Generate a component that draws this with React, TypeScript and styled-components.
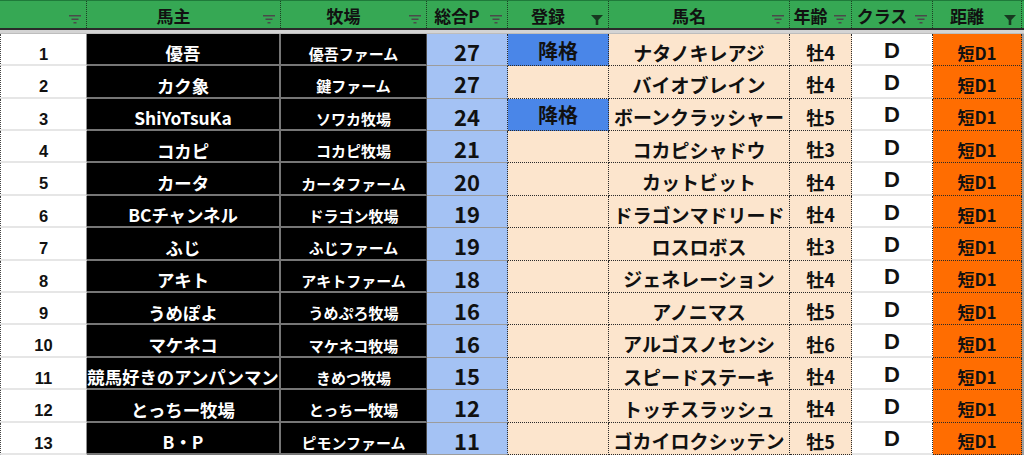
import React from "react";
import styled, { createGlobalStyle, css } from "styled-components";

const GlobalStyle = createGlobalStyle`
  html, body {
    margin: 0;
    padding: 0;
    background: #ffffff;
    overflow: hidden;
  }
  body {
    font-family: "Noto Sans CJK JP", "Noto Sans", sans-serif;
  }
`;

type Kind =
  | "num"
  | "owner"
  | "farm"
  | "points"
  | "reg"
  | "horse"
  | "age"
  | "cls"
  | "dist";

const COLUMNS = "87px 194px 146px 81px 101px 181px 62px 81px 89px 2px";

const Sheet = styled.div`
  width: 1024px;
  height: 455px;
  overflow: hidden;
  display: flex;
  flex-direction: column;
  background: #ffffff;
`;

const HeaderRow = styled.div`
  display: grid;
  grid-template-columns: ${COLUMNS};
  height: 30px;
  border-top: 1px solid #1f7a3a;
  border-bottom: 2px solid #2a2a2a;
  box-sizing: border-box;
  background: #36a854;
`;

const HeaderCell = styled.div<{ $last?: boolean }>`
  position: relative;
  display: flex;
  align-items: center;
  justify-content: center;
  padding: 3px 20px 0 0;
  box-sizing: border-box;
  border-right: 1px dotted ${(p) => (p.$last ? "transparent" : "#1d3d24")};
  font-size: 17px;
  font-weight: 700;
  color: #111;
  line-height: 1;
  white-space: nowrap;
`;

const FilterMark = styled.span`
  position: absolute;
  right: 5px;
  top: 14px;
  width: 12px;
  height: 9px;
  display: flex;
`;

const FreezeBar = styled.div`
  height: 4px;
  background: #d4d4d4;
  border-bottom: 1px solid #bdbdbd;
  box-sizing: border-box;
`;

const Body = styled.div`
  display: grid;
  grid-template-columns: ${COLUMNS};
  grid-auto-rows: 32.4px;
`;

const dotted = css`
  border-right: 1px dotted #2a2a2a;
  border-bottom: 1px dotted #2a2a2a;
`;

const kindStyles: Record<Kind, ReturnType<typeof css>> = {
  num: css`
    background: #ffffff;
    color: #111;
    font-family: "Liberation Sans", Arial, sans-serif;
    font-size: 16.5px;
    border-left: 1px dotted #444;
    border-bottom: 2px solid #e6e6e6;
    border-right: 1px solid #8f8f8f;
    padding-top: 10px;
  `,
  owner: css`
    background: #000000;
    color: #ffffff;
    font-size: 17.4px;
    border-bottom: 2px solid #767676;
    border-right: 2px solid #767676;
    padding-top: 8px;
  `,
  farm: css`
    background: #000000;
    color: #ffffff;
    font-size: 15px;
    border-bottom: 2px solid #767676;
    border-right: 1px solid #4a4a4a;
    padding-top: 9px;
  `,
  points: css`
    background: #a4c2f4;
    color: #111;
    font-size: 22px;
    border-bottom: 1px solid #9c9c9c;
    border-right: 1px dotted #2a2a2a;
    padding-top: 3px;
  `,
  reg: css`
    background: #fce5cd;
    color: #111;
    font-size: 20px;
    padding-top: 2px;
    ${dotted};
  `,
  horse: css`
    background: #fce5cd;
    color: #111;
    font-size: 19px;
    ${dotted};
    padding-top: 5px;
  `,
  age: css`
    background: #fce5cd;
    color: #111;
    font-size: 18px;
    ${dotted};
    padding-top: 5px;
  `,
  cls: css`
    background: #ffffff;
    color: #111;
    font-family: "Liberation Sans", Arial, sans-serif;
    font-size: 22px;
    border-bottom: 2px solid #e6e6e6;
    border-right: 1px dotted #2a2a2a;
    padding-top: 3px;
  `,
  dist: css`
    background: #ff6d01;
    color: #111;
    font-size: 17px;
    ${dotted};
    padding-top: 5px;
  `,
};

const Cell = styled.div<{ $kind: Kind; $demoted?: boolean }>`
  display: flex;
  align-items: center;
  justify-content: center;
  box-sizing: border-box;
  overflow: hidden;
  white-space: nowrap;
  font-weight: 700;
  line-height: 1;
  ${(p) => kindStyles[p.$kind]};
  ${(p) =>
    p.$demoted &&
    css`
      background: #4a86e8;
    `};
`;

const Edge = styled.div`
  background: #9e9e9e;
`;

const OutlineFilter = () => (
  <svg width="12" height="9" viewBox="0 0 12 9">
    <rect x="0" y="0" width="12" height="1.5" fill="#4a4a4a" />
    <rect x="2.5" y="3.5" width="7" height="1.5" fill="#4a4a4a" />
    <rect x="4.5" y="7" width="3" height="1.5" fill="#4a4a4a" />
  </svg>
);

const ActiveFilter = () => (
  <svg width="12" height="10" viewBox="0 0 12 10">
    <path d="M0 0 H12 L7.3 5 V10 H4.7 V5 Z" fill="#173a20" />
  </svg>
);

const headers: { label: string; active?: boolean }[] = [
  { label: "" },
  { label: "馬主" },
  { label: "牧場" },
  { label: "総合P" },
  { label: "登録", active: true },
  { label: "馬名" },
  { label: "年齢" },
  { label: "クラス" },
  { label: "距離", active: true },
];

type Entry = {
  owner: string;
  farm: string;
  points: number;
  demoted?: boolean;
  horse: string;
  age: string;
};

const entries: Entry[] = [
  { owner: "優吾", farm: "優吾ファーム", points: 27, demoted: true, horse: "ナタノキレアジ", age: "牡4" },
  { owner: "カク象", farm: "鍵ファーム", points: 27, horse: "バイオブレイン", age: "牡4" },
  { owner: "ShiYoTsuKa", farm: "ソワカ牧場", points: 24, demoted: true, horse: "ボーンクラッシャー", age: "牡5" },
  { owner: "コカピ", farm: "コカピ牧場", points: 21, horse: "コカピシャドウ", age: "牡3" },
  { owner: "カータ", farm: "カータファーム", points: 20, horse: "カットビット", age: "牡4" },
  { owner: "BCチャンネル", farm: "ドラゴン牧場", points: 19, horse: "ドラゴンマドリード", age: "牡4" },
  { owner: "ふじ", farm: "ふじファーム", points: 19, horse: "ロスロボス", age: "牡3" },
  { owner: "アキト", farm: "アキトファーム", points: 18, horse: "ジェネレーション", age: "牡4" },
  { owner: "うめぽよ", farm: "うめぷろ牧場", points: 16, horse: "アノニマス", age: "牡5" },
  { owner: "マケネコ", farm: "マケネコ牧場", points: 16, horse: "アルゴスノセンシ", age: "牡6" },
  { owner: "競馬好きのアンパンマン", farm: "きめつ牧場", points: 15, horse: "スピードステーキ", age: "牡4" },
  { owner: "とっちー牧場", farm: "とっちー牧場", points: 12, horse: "トッチスラッシュ", age: "牡4" },
  { owner: "B・P", farm: "ピモンファーム", points: 11, horse: "ゴカイロクシッテン", age: "牡5" },
];

const App = () => {
  return (
    <>
      <GlobalStyle />
      <Sheet>
        <HeaderRow>
          {headers.map((h, i) => (
            <HeaderCell key={i}>
              {h.label}
              <FilterMark>
                {h.active ? <ActiveFilter /> : <OutlineFilter />}
              </FilterMark>
            </HeaderCell>
          ))}
          <HeaderCell $last />
        </HeaderRow>
        <FreezeBar />
        <Body>
          {entries.map((e, i) => (
            <React.Fragment key={i}>
              <Cell $kind="num">{i + 1}</Cell>
              <Cell $kind="owner">{e.owner}</Cell>
              <Cell $kind="farm">{e.farm}</Cell>
              <Cell $kind="points">{e.points}</Cell>
              <Cell $kind="reg" $demoted={e.demoted}>
                {e.demoted ? "降格" : ""}
              </Cell>
              <Cell $kind="horse">{e.horse}</Cell>
              <Cell $kind="age">{e.age}</Cell>
              <Cell $kind="cls">D</Cell>
              <Cell $kind="dist">短D1</Cell>
              <Edge />
            </React.Fragment>
          ))}
        </Body>
      </Sheet>
    </>
  );
};

export default App;
